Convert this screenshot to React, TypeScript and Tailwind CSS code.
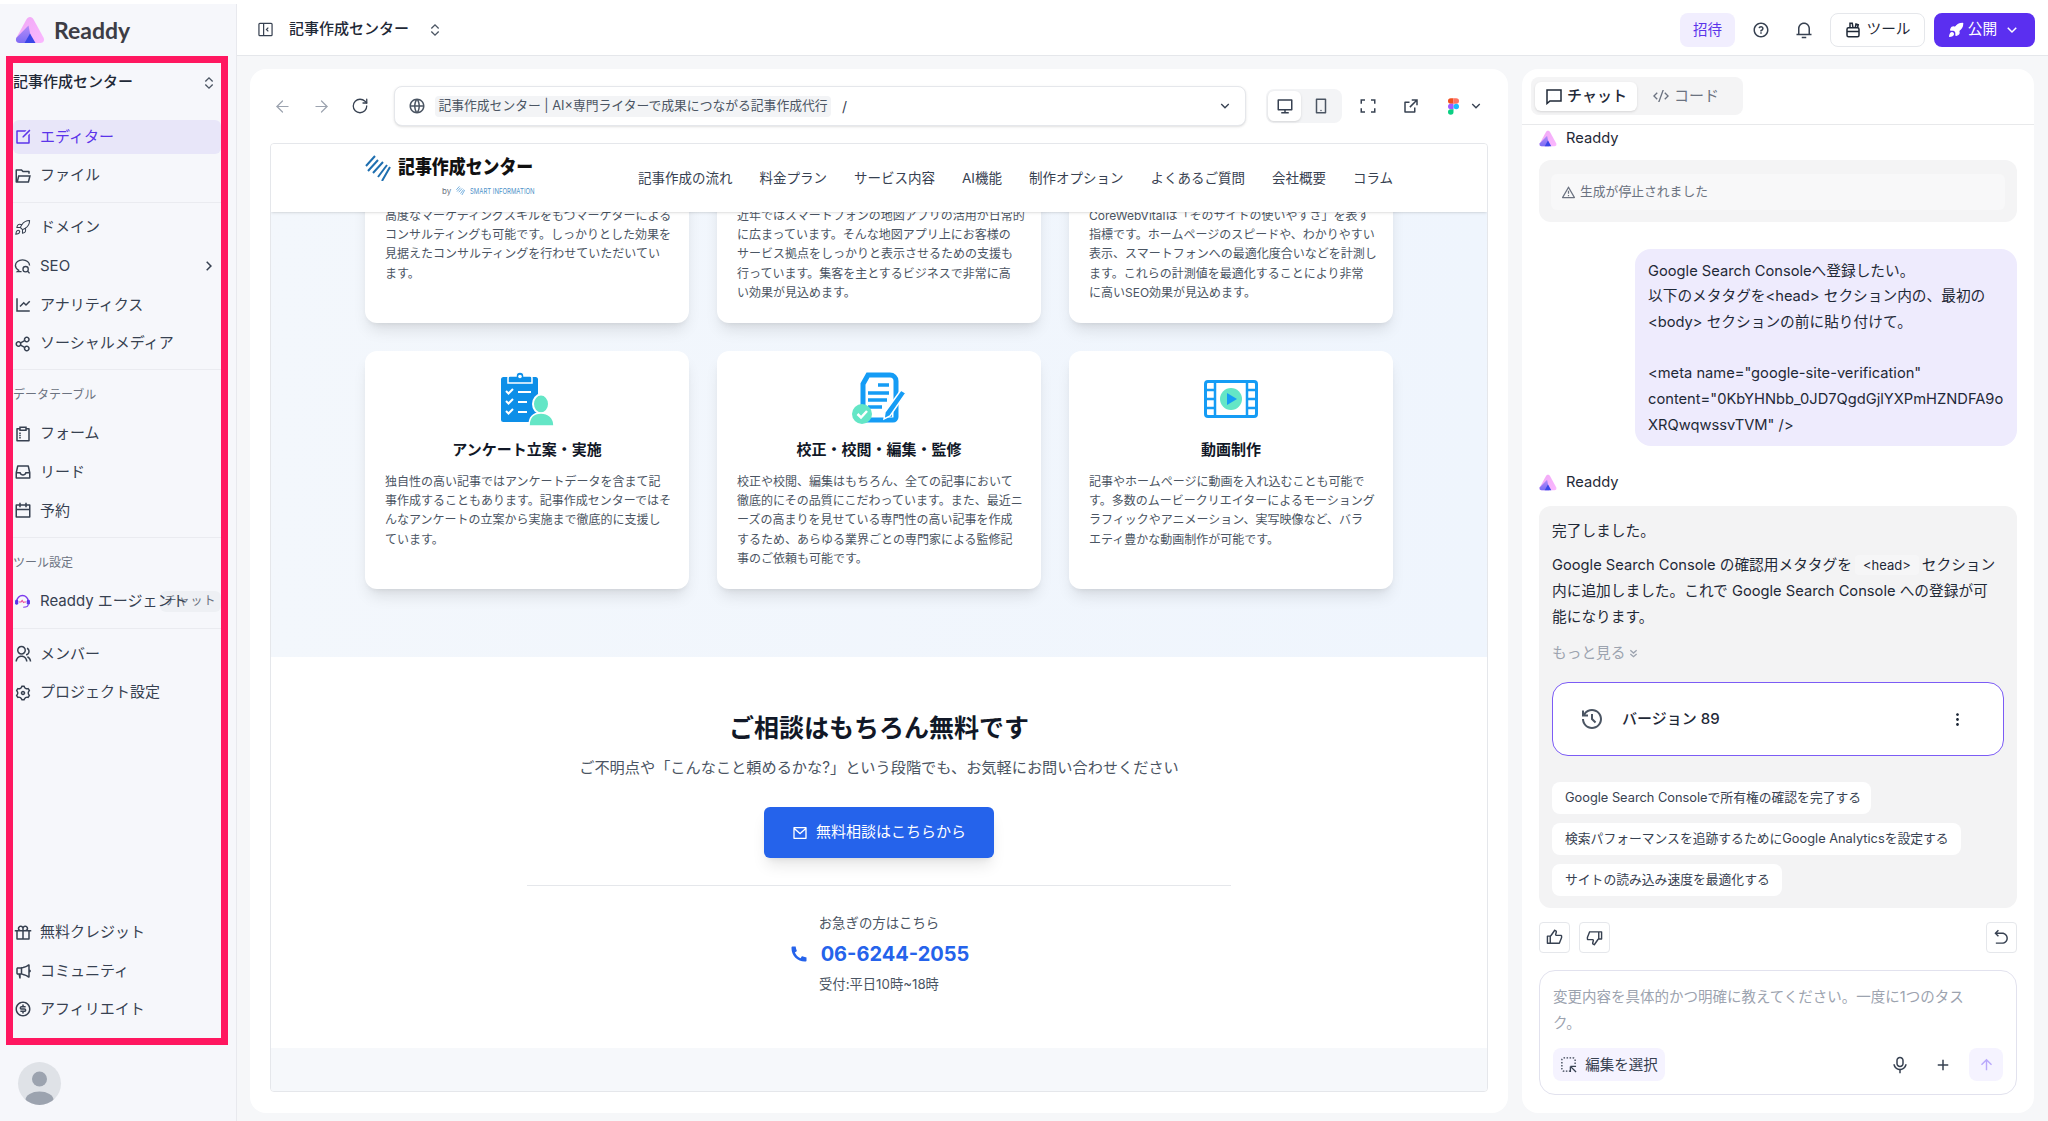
import React from "react";
import { ArrowLeft, ArrowRight, Rocket, RotateCw } from "lucide-react";
import {
  RiAddLine,
  RiAlertLine,
  RiArrowDownSLine,
  RiArrowGoBackLine,
  RiArrowRightSLine,
  RiArrowUpLine,
  RiCalendarLine,
  RiCodeSSlashLine,
  RiComputerLine,
  RiEditBoxLine,
  RiExpandUpDownLine,
  RiExternalLinkLine,
  RiFolderOpenLine,
  RiFullscreenLine,
  RiGiftLine,
  RiGlobalLine,
  RiGroupLine,
  RiHistoryLine,
  RiInbox2Line,
  RiLineChartLine,
  RiMailLine,
  RiMegaphoneLine,
  RiMicLine,
  RiMoneyDollarCircleLine,
  RiMore2Fill,
  RiNotification3Line,
  RiPhoneFill,
  RiQuestionLine,
  RiSettings3Line,
  RiShareLine,
  RiSmartphoneLine,
  RiSurveyLine,
  RiThumbDownLine,
  RiThumbUpLine,
} from "react-icons/ri";

function ReaddyLogo({ className }: { className?: string }) {
  return (
    <svg viewBox="0 0 30 28" className={className}>
      <defs>
        <linearGradient id="rd-right" x1="0" y1="0" x2="1" y2="1">
          <stop offset="0" stopColor="#f0a8f5" />
          <stop offset="1" stopColor="#fbb8ff" />
        </linearGradient>
        <linearGradient id="rd-left" x1="0" y1="0" x2="0" y2="1">
          <stop offset="0" stopColor="#b58cf8" />
          <stop offset="1" stopColor="#7c6cf4" />
        </linearGradient>
      </defs>
      <path
        d="M15 1c1.6 0 2.8 1 3.6 2.4l10 18.4c1.3 2.6-.2 5.2-3 5.2H4.400c-2.800 0-4.300-2.600-3-5.200l10-18.400C12.200 2 13.400 1 15 1Z"
        fill="url(#rd-right)"
      />
      <path
        d="M13.500 9.500 1.400 21.800C.1 24.400 1.600 27 4.400 27H17l-3.500-17.500Z"
        fill="url(#rd-left)"
      />
      <path d="M15 17.500 20.500 27h-11L15 17.500Z" fill="#3a46e8" />
    </svg>
  );
}

function SideRow({
  icon,
  label,
  active,
  right,
}: {
  icon: React.ReactNode;
  label: string;
  active?: boolean;
  right?: React.ReactNode;
}) {
  return (
    <div
      className={`relative z-10 flex h-[34px] items-center rounded-md pl-[1px] text-[15px] ${
        active ? "bg-[#e8e6f9] text-[#5b34ea]" : "text-[#374151]"
      }`}
    >
      <span className="flex w-[26px] shrink-0 items-center text-[18px]">{icon}</span>
      <span className="flex-1 whitespace-nowrap">{label}</span>
      {right}
    </div>
  );
}

function Divider({ className }: { className: string }) {
  return <div className={`h-px bg-[#eaebf0] ${className}`} />;
}

function SeoIcon() {
  return (
    <svg viewBox="0 0 18 18" className="h-[17px] w-[17px]" fill="none" stroke="currentColor" strokeWidth="1.400">
      <path d="M8 14.500H3.500L5 13C2.800 11.800 1.500 10 1.500 8c0-3.300 3.300-6 7.500-6s7.500 2.700 7.500 6" />
      <circle cx="12.300" cy="11.800" r="2.800" />
      <path d="m14.500 14 2 2.300" />
    </svg>
  );
}

function Sidebar() {
  return (
    <aside className="mt-[4px] flex h-[1117px] w-[237px] shrink-0 flex-col border-r border-[#e8e9ee] bg-[#f6f7fb]">
      <div className="flex h-[52px] items-center pl-[15px]">
        <ReaddyLogo className="h-[28px] w-[30px]" />
        <span className="ml-[9px] font-['Lato','Noto_Sans_CJK_JP',sans-serif] text-[23px] font-bold text-[#3d3d45]">
          Readdy
        </span>
      </div>
      <div className="ml-[6px] mr-[8px] flex h-[989px] flex-col border-[7px] border-[#ff1760]">
        <div className="flex h-[39px] shrink-0 items-center justify-between pr-[4px] text-[15px] text-[#1f2937]">
          <span className="font-medium">記事作成センター</span>
          <RiExpandUpDownLine className="text-[16px] text-[#4b5563]" />
        </div>

        <div className="mt-[18px] flex flex-col gap-[4.670px]">
          <SideRow active icon={<RiEditBoxLine />} label="エディター" />
          <SideRow icon={<RiFolderOpenLine />} label="ファイル" />
        </div>
        <Divider className="mt-[9px]" />

        <div className="mt-[8px] flex flex-col gap-[4.670px]">
          <SideRow icon={<Rocket size={17} strokeWidth={1.5} />} label="ドメイン" />
          <SideRow
            icon={<SeoIcon />}
            label="SEO"
            right={<RiArrowRightSLine className="mr-[3px] text-[18px] text-[#374151]" />}
          />
          <SideRow icon={<RiLineChartLine />} label="アナリティクス" />
          <SideRow icon={<RiShareLine />} label="ソーシャルメディア" />
        </div>
        <Divider className="mt-[8px]" />

        <p className="mt-[17px] text-[12px] leading-[16px] text-[#6b7280]">データテーブル</p>
        <div className="mt-[14px] flex flex-col gap-[4.670px]">
          <SideRow icon={<RiSurveyLine />} label="フォーム" />
          <SideRow icon={<RiInbox2Line />} label="リード" />
          <SideRow icon={<RiCalendarLine />} label="予約" />
        </div>
        <Divider className="mt-[9px]" />

        <p className="mt-[17px] text-[12px] leading-[16px] text-[#6b7280]">ツール設定</p>
        <div className="relative mt-[13px]">
          <span className="absolute right-0 top-[7px] flex h-[21px] w-[61px] items-center justify-center rounded-md bg-[#eef0f4] text-[12px] tracking-[1px] text-[#6b7280]">
            チャット
          </span>
          <SideRow
            icon={
              <svg viewBox="0 0 24 24" className="h-[17px] w-[17px]">
                <path
                  d="M4 13a8 8 0 0 1 16 0"
                  fill="none"
                  stroke="#7c3aed"
                  strokeWidth="2"
                />
                <rect x="1.500" y="11" width="4.500" height="7" rx="2" fill="#5b34ea" />
                <rect x="18" y="11" width="4.500" height="7" rx="2" fill="#5b34ea" />
                <path d="M7 14h3l1.500-2 2 3 1.500-1h2" fill="none" stroke="#ec4899" strokeWidth="1.500" />
                <path d="M20 18c0 2.500-3 3.500-7 3.500" fill="none" stroke="#7c3aed" strokeWidth="1.500" />
              </svg>
            }
            label="Readdy エージェント"
          />
        </div>
        <Divider className="mt-[10px]" />

        <div className="mt-[8px] flex flex-col gap-[4.670px]">
          <SideRow icon={<RiGroupLine />} label="メンバー" />
          <SideRow icon={<RiSettings3Line />} label="プロジェクト設定" />
        </div>

        <div className="mt-auto flex flex-col gap-[4.200px] pb-[12px]">
          <SideRow icon={<RiGiftLine />} label="無料クレジット" />
          <SideRow icon={<RiMegaphoneLine />} label="コミュニティ" />
          <SideRow icon={<RiMoneyDollarCircleLine />} label="アフィリエイト" />
        </div>
      </div>
      <div className="ml-[18px] mt-[17px] h-[43px] w-[43px] overflow-hidden rounded-full bg-[#dfe2e7]">
        <svg viewBox="0 0 43 43" className="h-full w-full">
          <ellipse cx="21.500" cy="17" rx="7.500" ry="7.500" fill="#9ca3af" />
          <ellipse cx="21.500" cy="38" rx="14" ry="8.500" fill="#9ca3af" />
        </svg>
      </div>
    </aside>
  );
}

function ToolsIcon() {
  return (
    <svg viewBox="0 0 24 24" className="h-[18px] w-[18px]" fill="none" stroke="currentColor" strokeWidth="2">
      <rect x="4" y="9" width="16" height="12" rx="2" />
      <path d="M4 14h16M8 9V3h3l1 6M15 9l1-5 3 1-1 4" />
    </svg>
  );
}

function TopBar() {
  return (
    <header className="flex h-[52px] shrink-0 items-center justify-between border-b border-[#e5e7eb] bg-white pl-[21px] pr-[13px]">
      <div className="flex items-center text-[15px] font-medium text-[#1f2937]">
        <svg viewBox="0 0 16 16" className="h-[15px] w-[15px]" fill="none" stroke="#374151" strokeWidth="1.300">
          <rect x="1" y="1.500" width="14" height="13" rx="1" />
          <path d="M6 1.500v13M11 6 9 8l2 2" />
        </svg>
        <span className="ml-[16px]">記事作成センター</span>
        <RiExpandUpDownLine className="ml-[18px] text-[16px] text-[#4b5563]" />
      </div>
      <div className="flex items-center">
        <button className="flex h-[34px] w-[55px] items-center justify-center rounded-lg bg-[#f1eefe] text-[14.500px] text-[#5b34ea]">
          招待
        </button>
        <RiQuestionLine className="ml-[17px] text-[18px] text-[#374151]" />
        <RiNotification3Line className="ml-[25px] text-[18px] text-[#374151]" />
        <button className="ml-[17px] flex h-[34px] w-[95px] items-center justify-center gap-[4px] rounded-lg border border-[#e5e7eb] bg-white text-[14.700px] text-[#1f2937]">
          <ToolsIcon />
          ツール
        </button>
        <button className="ml-[9px] flex h-[34px] w-[101px] items-center justify-center gap-[4px] rounded-lg bg-[#5b2ff0] text-[14.700px] text-white">
          <Rocket size={16} fill="currentColor" />
          公開
          <RiArrowDownSLine className="ml-[2px] text-[18px]" />
        </button>
      </div>
    </header>
  );
}

function FigmaMark() {
  return (
    <svg viewBox="0 0 12 18" className="h-[17px] w-[11px]">
      <path d="M6 0H3a3 3 0 0 0 0 6h3V0Z" fill="#f24e1e" />
      <path d="M6 0h3a3 3 0 0 1 0 6H6V0Z" fill="#ff7262" />
      <path d="M6 6H3a3 3 0 0 0 0 6h3V6Z" fill="#a259ff" />
      <circle cx="9" cy="9" r="3" fill="#1abcfe" />
      <path d="M6 12H3a3 3 0 1 0 3 3v-3Z" fill="#0acf83" />
    </svg>
  );
}

function BrowserBar() {
  return (
    <div className="flex h-[74px] shrink-0 items-center pl-[23px] pr-[21px]">
      <ArrowLeft size={19} strokeWidth={1.5} className="text-[#9ca3af]" />
      <ArrowRight size={19} strokeWidth={1.5} className="ml-[20px] text-[#9ca3af]" />
      <RotateCw size={18} strokeWidth={1.7} className="ml-[20px] text-[#374151]" />
      <div className="ml-[25px] flex h-[40px] w-[852px] items-center rounded-lg border border-[#e5e7eb] bg-white pl-[13px] pr-[12px] shadow-sm">
        <RiGlobalLine className="text-[18px] text-[#4b5563]" />
        <span className="ml-[9px] flex h-[21px] w-[396px] items-center justify-center whitespace-nowrap rounded bg-[#f3f4f6] text-[12.800px] text-[#4b5563]">
          記事作成センター | AI×専門ライターで成果につながる記事作成代行
        </span>
        <span className="ml-[11px] text-[14px] text-[#374151]">/</span>
        <RiArrowDownSLine className="ml-auto text-[16px] text-[#374151]" />
      </div>
      <div className="ml-[20px] flex h-[34px] w-[76px] items-center rounded-lg bg-[#f3f4f6] p-[2px]">
        <span className="flex h-[30px] w-[33px] items-center justify-center rounded-md bg-white shadow-sm">
          <RiComputerLine className="text-[18px] text-[#374151]" />
        </span>
        <RiSmartphoneLine className="ml-[11px] text-[18px] text-[#4b5563]" />
      </div>
      <RiFullscreenLine className="ml-[17px] text-[18px] text-[#374151]" />
      <RiExternalLinkLine className="ml-[25px] text-[18px] text-[#374151]" />
      <span className="ml-[28px]">
        <FigmaMark />
      </span>
      <RiArrowDownSLine className="ml-[9px] text-[16px] text-[#374151]" />
    </div>
  );
}

function SiteLogoMark({ className, color }: { className: string; color: string }) {
  return (
    <svg viewBox="0 0 26 26" className={className} fill="none" stroke={color} strokeWidth="2">
      <path d="M1 11 10 1M3 16 13 5M8 18 18 7M13 22 22 10M17 26l8-14" />
    </svg>
  );
}

function SiteHeader() {
  const nav = ["記事作成の流れ", "料金プラン", "サービス内容", "AI機能", "制作オプション", "よくあるご質問", "会社概要", "コラム"];
  return (
    <div className="relative z-10 flex h-[68px] shrink-0 items-center bg-white pl-[94px] shadow-sm">
      <div className="w-[273px] shrink-0">
        <div className="-mt-[6px] flex items-center">
          <SiteLogoMark className="h-[26px] w-[26px]" color="#1f6fb0" />
          <span className="ml-[7px] origin-left scale-x-[0.89] whitespace-nowrap text-[19px] font-black leading-[28px] text-[#111]">
            記事作成センター
          </span>
        </div>
        <div className="ml-[77px] mt-[3px] flex items-center gap-[5px] text-[8px] leading-[12px]">
          <span className="text-[#6b7280]">by</span>
          <SiteLogoMark className="h-[9px] w-[9px]" color="#3b8ed0" />
          <span className="origin-left scale-x-75 whitespace-nowrap text-[#4f93c9]">SMART INFORMATION</span>
        </div>
      </div>
      <nav className="flex gap-[27px] text-[13.500px] text-[#374151]">
        {nav.map((item) => (
          <span key={item} className="whitespace-nowrap">
            {item}
          </span>
        ))}
      </nav>
    </div>
  );
}

function ClipboardArt() {
  return (
    <svg viewBox="0 0 54 54" className="h-[54px] w-[54px]">
      <rect x="1" y="5" width="37" height="45" rx="2.500" fill="#0d8fe8" />
      <path d="M10 4h6a4 4 0 0 1 8 0h6a2 2 0 0 1 2 2v5H8V6a2 2 0 0 1 2-2Z" fill="#0d8fe8" stroke="#fff" strokeWidth="1.500" />
      <circle cx="20" cy="4.500" r="1.800" fill="#fff" />
      <g fill="none" stroke="#fff" strokeWidth="2">
        <path d="m6 19 2.500 2.500L13 17M6 29l2.500 2.500L13 27M6 39l2.500 2.500L13 37" />
        <path d="M18 20h13M18 30h9M18 40h9" />
      </g>
      <ellipse cx="41" cy="32" rx="8" ry="9.500" fill="#64e6c6" stroke="#fff" strokeWidth="2" />
      <path d="M29 54c0-9 5-13 12-13s13 4 13 13H29Z" fill="#64e6c6" stroke="#fff" strokeWidth="1.500" />
    </svg>
  );
}

function DocArt() {
  return (
    <svg viewBox="0 0 54 54" className="h-[54px] w-[54px]">
      <path
        d="M16 3h22a6 6 0 0 1 6 6v36a3 3 0 0 1-3 3H14a3 3 0 0 1-3-3V12l5-9Z"
        fill="#fff"
        stroke="#159cf5"
        strokeWidth="5"
      />
      <g stroke="#159cf5" strokeWidth="3.500">
        <path d="M26 13h11M16 21h21M16 28h19M16 35h14M34 43h6" />
      </g>
      <path d="m33 40 16-22 5 3-16 23-6 3 1-7Z" fill="#159cf5" stroke="#fff" strokeWidth="1.500" />
      <circle cx="10" cy="42" r="10" fill="#64e6c6" />
      <path d="m5.500 42 3.500 3.500 6-6.500" fill="none" stroke="#fff" strokeWidth="2.500" />
    </svg>
  );
}

function FilmArt() {
  return (
    <svg viewBox="0 0 54 38" className="h-[38px] w-[54px]">
      <rect x="1.500" y="1.500" width="51" height="35" rx="2.500" fill="#fff" stroke="#159cf5" strokeWidth="3" />
      <path d="M11 2v34M43 2v34" stroke="#159cf5" strokeWidth="2.500" />
      <path d="M2 10h9M2 19h9M2 28h9M43 10h9M43 19h9M43 28h9" stroke="#159cf5" strokeWidth="2.500" />
      <circle cx="27" cy="19" r="11" fill="#64e6c6" />
      <path d="m23 13 10 6-10 6V13Z" fill="#159cf5" />
    </svg>
  );
}

function ServiceCard({
  art,
  title,
  lines,
}: {
  art?: React.ReactNode;
  title?: string;
  lines: string[];
}) {
  return (
    <div className="h-[238px] rounded-xl bg-white px-[20px] pt-[21px] shadow-[0_10px_15px_-3px_rgba(0,0,0,0.1),0_4px_6px_-4px_rgba(0,0,0,0.1)]">
      <div className="flex h-[54px] items-center justify-center">{art}</div>
      <h3 className="mt-[12px] h-[24px] text-center text-[15px] font-bold leading-[24px] text-[#111827]">{title}</h3>
      <p className="mt-[10px] whitespace-nowrap text-[12px] leading-[19.200px] text-[#4b5563]">
        {lines.map((line) => (
          <React.Fragment key={line}>
            {line}
            <br />
          </React.Fragment>
        ))}
      </p>
    </div>
  );
}

function PreviewFrame() {
  return (
    <div className="mx-[20px] flex h-[949px] flex-col overflow-hidden rounded border border-[#e5e7eb]">
      <SiteHeader />
      <div className="h-[445px] shrink-0 bg-gradient-to-r from-[#f3f7fc] to-[#eff5fd]">
        <div className="mx-auto -mt-[127px] grid w-[1028px] grid-cols-3 gap-x-[28px] gap-y-[28px]">
          <ServiceCard
            lines={[
              "高度なマーケティングスキルをもつマーケターによる",
              "コンサルティングも可能です。しっかりとした効果を",
              "見据えたコンサルティングを行わせていただいてい",
              "ます。",
            ]}
          />
          <ServiceCard
            lines={[
              "近年ではスマートフォンの地図アプリの活用が日常的",
              "に広まっています。そんな地図アプリ上にお客様の",
              "サービス拠点をしっかりと表示させるための支援も",
              "行っています。集客を主とするビジネスで非常に高",
              "い効果が見込めます。",
            ]}
          />
          <ServiceCard
            lines={[
              "CoreWebVitalは「そのサイトの使いやすさ」を表す",
              "指標です。ホームページのスピードや、わかりやすい",
              "表示、スマートフォンへの最適化度合いなどを計測し",
              "ます。これらの計測値を最適化することにより非常",
              "に高いSEO効果が見込めます。",
            ]}
          />
          <ServiceCard
            art={<ClipboardArt />}
            title="アンケート立案・実施"
            lines={[
              "独自性の高い記事ではアンケートデータを含まて記",
              "事作成することもあります。記事作成センターではそ",
              "んなアンケートの立案から実施まで徹底的に支援し",
              "ています。",
            ]}
          />
          <ServiceCard
            art={<DocArt />}
            title="校正・校閲・編集・監修"
            lines={[
              "校正や校閲、編集はもちろん、全ての記事において",
              "徹底的にその品質にこだわっています。また、最近ニ",
              "ーズの高まりを見せている専門性の高い記事を作成",
              "するため、あらゆる業界ごとの専門家による監修記",
              "事のご依頼も可能です。",
            ]}
          />
          <ServiceCard
            art={<FilmArt />}
            title="動画制作"
            lines={[
              "記事やホームページに動画を入れ込むことも可能で",
              "す。多数のムービークリエイターによるモーショング",
              "ラフィックやアニメーション、実写映像など、バラ",
              "エティ豊かな動画制作が可能です。",
            ]}
          />
        </div>
      </div>
      <section className="flex h-[391px] shrink-0 flex-col items-center bg-white pt-[53px]">
        <h2 className="text-[25px] font-bold leading-[36px] text-[#111827]">ご相談はもちろん無料です</h2>
        <p className="mt-[10px] text-[15.200px] leading-[24px] text-[#4b5563]">
          ご不明点や「こんなこと頼めるかな?」という段階でも、お気軽にお問い合わせください
        </p>
        <button className="mt-[27px] flex h-[51px] w-[230px] items-center justify-center gap-[8px] rounded-md bg-[#2563eb] text-[15px] text-white shadow-lg">
          <RiMailLine className="text-[16px]" />
          無料相談はこちらから
        </button>
        <div className="mt-[27px] h-px w-[704px] bg-[#e5e7eb]" />
        <p className="mt-[27px] text-[13.400px] leading-[20px] text-[#4b5563]">お急ぎの方はこちら</p>
        <div className="mt-[7px] flex h-[28px] items-center gap-[12px] text-[20px] font-bold text-[#2563eb]">
          <RiPhoneFill className="text-[20px]" />
          06-6244-2055
        </div>
        <p className="mt-[6px] text-[13.300px] leading-[20px] text-[#4b5563]">受付:平日10時~18時</p>
      </section>
      <div className="flex-1 bg-[#f6f8fb]" />
    </div>
  );
}

function ReaddyLabel() {
  return (
    <div className="flex h-[20px] items-center text-[14.700px] text-[#1f2937]">
      <ReaddyLogo className="h-[17px] w-[18px]" />
      <span className="ml-[9px]">Readdy</span>
    </div>
  );
}

function Chip({ children, width }: { children: React.ReactNode; width: string }) {
  return (
    <div className={`flex h-[32px] items-center whitespace-nowrap rounded-lg bg-white pl-[13px] text-[12.800px] text-[#374151] ${width}`}>
      {children}
    </div>
  );
}

function SquareBtn({ children }: { children: React.ReactNode }) {
  return (
    <button className="flex h-[31px] w-[31px] items-center justify-center rounded border border-[#e5e7eb] bg-white text-[17px] text-[#374151]">
      {children}
    </button>
  );
}

function ChatPanel() {
  return (
    <section className="flex h-[1044px] w-[512px] shrink-0 flex-col rounded-2xl bg-white">
      <div className="flex h-[56px] shrink-0 items-start border-b border-[#e8e9eb] pl-[9px] pt-[8px]">
        <div className="flex h-[38px] w-[212px] items-center rounded-lg bg-[#f4f4f5] pl-[4px]">
          <span className="flex h-[29px] w-[102px] items-center justify-center gap-[4px] rounded-md bg-white text-[15px] font-medium text-[#1f2937] shadow-sm">
            <svg viewBox="0 0 18 18" className="h-[18px] w-[18px]" fill="none" stroke="currentColor" strokeWidth="1.500">
              <path d="M2 3h14v11H5l-3 2.500V3Z" />
              <path d="M6 8.500h.01M9 8.500h.01M12 8.500h.01" strokeWidth="1.800" />
            </svg>
            チャット
          </span>
          <span className="ml-[16px] flex items-center gap-[5px] text-[15px] text-[#6b7280]">
            <RiCodeSSlashLine className="text-[16px]" />
            コード
          </span>
        </div>
      </div>
      <div className="flex flex-1 flex-col px-[17px]">
        <div className="mt-[3px]">
          <ReaddyLabel />
        </div>
        <div className="mt-[12px] h-[62px] rounded-xl bg-[#f4f4f5] p-[14px_13px]">
          <div className="-mx-px flex h-[36px] items-center gap-[4px] rounded-md bg-[#f8f8f9] pl-[10px] text-[12.800px] text-[#6b7280]">
            <RiAlertLine className="text-[15px]" />
            生成が停止されました
          </div>
        </div>

        <div className="ml-auto mt-[27px] h-[197px] w-[382px] rounded-2xl bg-[#eeebfd] px-[13px] py-[9.500px] text-[14.700px] leading-[25.700px] text-[#1f2937]">
          Google Search Consoleへ登録したい。
          <br />
          以下のメタタグを&lt;head&gt; セクション内の、最初の
          <br />
          &lt;body&gt; セクションの前に貼り付けて。
          <br />
          <br />
          &lt;meta name="google-site-verification"
          <br />
          content="0KbYHNbb_0JD7QgdGjlYXPmHZNDFA9o
          <br />
          XRQwqwssvTVM" /&gt;
        </div>

        <div className="mt-[26px]">
          <ReaddyLabel />
        </div>

        <div className="mt-[14px] h-[402px] rounded-xl bg-[#f3f3f4] px-[13px] pt-[12px] text-[14.700px] leading-[26px] text-[#1f2937]">
          <p>完了しました。</p>
          <p className="mt-[8px] whitespace-nowrap">
            Google Search Console の確認用メタタグを
            <code className="mx-[3px] rounded bg-[#f6f6f7] px-[8px] py-[2px] font-['Inter','Noto_Sans_CJK_JP',sans-serif] text-[13px]">
              &lt;head&gt;
            </code>
            セクション
            <br />
            内に追加しました。これで Google Search Console への登録が可
            <br />
            能になります。
          </p>
          <p className="mt-[10px] flex items-center gap-[4px] text-[#9ca3af]">
            もっと見る
            <svg viewBox="0 0 10 10" className="h-[9px] w-[9px]" fill="none" stroke="currentColor" strokeWidth="1.500">
              <path d="m1.500 1.500 3.500 3 3.500-3M1.500 5.500l3.500 3 3.500-3" />
            </svg>
          </p>
          <div className="mt-[16px] flex h-[74px] items-center rounded-2xl border-[1.500px] border-[#7c5cf5] bg-white pl-[27px] pr-[37px]">
            <RiHistoryLine className="text-[24px] text-[#4b5563]" />
            <span className="ml-[18px] text-[15px] font-medium text-[#1f2937]">バージョン 89</span>
            <RiMore2Fill className="ml-auto text-[17px] text-[#1f2937]" />
          </div>
          <div className="mt-[26px] flex flex-col gap-[9px]">
            <Chip width="w-[319px]">Google Search Consoleで所有権の確認を完了する</Chip>
            <Chip width="w-[409px]">検索パフォーマンスを追跡するためにGoogle Analyticsを設定する</Chip>
            <Chip width="w-[230px]">サイトの読み込み速度を最適化する</Chip>
          </div>
        </div>

        <div className="mt-[14px] flex gap-[9px]">
          <SquareBtn>
            <RiThumbUpLine />
          </SquareBtn>
          <SquareBtn>
            <RiThumbDownLine />
          </SquareBtn>
          <div className="ml-auto">
            <SquareBtn>
              <RiArrowGoBackLine />
            </SquareBtn>
          </div>
        </div>

        <div className="mt-[17px] flex h-[125px] flex-col rounded-2xl border border-[#e2e2ee] bg-white px-[13px] pt-[13px]">
          <p className="text-[14.500px] leading-[26px] text-[#9ca3af]">
            変更内容を具体的かつ明確に教えてください。一度に1つのタス
            <br />
            ク。
          </p>
          <div className="mt-auto mb-[13px] flex items-center">
            <span className="flex h-[33px] w-[112px] items-center justify-center gap-[8px] rounded-lg bg-[#f5f3ff] text-[14.500px] text-[#374151]">
              <svg viewBox="0 0 18 18" className="h-[17px] w-[17px]" fill="none" stroke="#374151" strokeWidth="1.400">
                <path d="M11 16H4a2 2 0 0 1-2-2V4a2 2 0 0 1 2-2h10a2 2 0 0 1 2 2v6" strokeDasharray="1.600 1.600" />
                <path d="M11 11h6M11 11v6M11 11l6 6" />
              </svg>
              編集を選択
            </span>
            <RiMicLine className="ml-auto text-[18px] text-[#374151]" />
            <RiAddLine className="ml-[25px] text-[18px] text-[#374151]" />
            <span className="ml-[17px] flex h-[33px] w-[34px] items-center justify-center rounded-lg bg-[#f5f3ff]">
              <RiArrowUpLine className="text-[17px] text-[#b9a8fb]" />
            </span>
          </div>
        </div>
      </div>
    </section>
  );
}

export default function App() {
  return (
    <div className="flex h-[1121px] w-[2048px] overflow-hidden bg-white font-['Inter','Noto_Sans_CJK_JP',sans-serif]">
      <Sidebar />
      <div className="flex min-w-0 flex-1 flex-col">
        <div className="h-[4px] bg-white" />
        <TopBar />
        <main className="flex flex-1 gap-[14px] bg-[#f6f7f9] pl-[13px] pr-[14px] pt-[13px]">
          <section className="h-[1044px] w-[1258px] shrink-0 rounded-2xl bg-white">
            <BrowserBar />
            <PreviewFrame />
          </section>
          <ChatPanel />
        </main>
      </div>
    </div>
  );
}
